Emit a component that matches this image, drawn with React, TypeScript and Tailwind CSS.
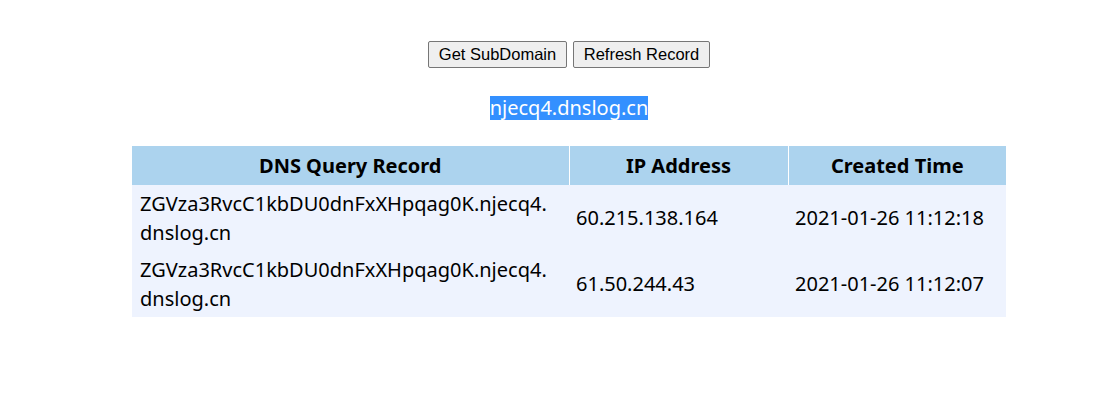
const records = [
  { host: "ZGVza3RvcC1kbDU0dnFxXHpqag0K.njecq4.", tail: "dnslog.cn", ip: "60.215.138.164", time: "2021-01-26 11:12:18" },
  { host: "ZGVza3RvcC1kbDU0dnFxXHpqag0K.njecq4.", tail: "dnslog.cn", ip: "61.50.244.43", time: "2021-01-26 11:12:07" },
];

export default function App() {
  return (
    <div className="min-h-[393px] w-[1096px] bg-white">
      <div className="ml-[132px] w-[874px] pt-[41px] flex flex-col items-center">
        <div className="flex gap-[6px] font-['Liberation_Sans',Arial,sans-serif] text-[16.5px] text-black">
          <button className="h-[27px] w-[139px] rounded-[2px] border border-[#767676] bg-[#efefef] leading-none">
            Get SubDomain
          </button>
          <button className="h-[27px] w-[137px] rounded-[2px] border border-[#767676] bg-[#efefef] leading-none">
            Refresh Record
          </button>
        </div>

        <div className="mt-[28px] h-[24px] bg-[#3390ff] font-['Noto_Sans',sans-serif] text-[20px] leading-[24px] text-white">
          njecq4.dnslog.cn
        </div>

        <table className="mt-[26px] w-[874px] border-collapse font-['Noto_Sans',sans-serif] text-[20px] text-black">
          <thead>
            <tr className="h-[39px] bg-[#acd3ee]">
              <th className="w-[437px] border-r border-white font-bold">DNS Query Record</th>
              <th className="w-[219px] border-r border-white font-bold">IP Address</th>
              <th className="font-bold">Created Time</th>
            </tr>
          </thead>
          <tbody className="bg-[#eef3fe]">
            {records.map((r) => (
              <tr key={r.ip} className="h-[66px]">
                <td className="px-[8px] leading-[29px]">
                  {r.host}
                  <br />
                  {r.tail}
                </td>
                <td className="px-[7px]">{r.ip}</td>
                <td className="px-[7px]">{r.time}</td>
              </tr>
            ))}
          </tbody>
        </table>
      </div>
    </div>
  );
}
